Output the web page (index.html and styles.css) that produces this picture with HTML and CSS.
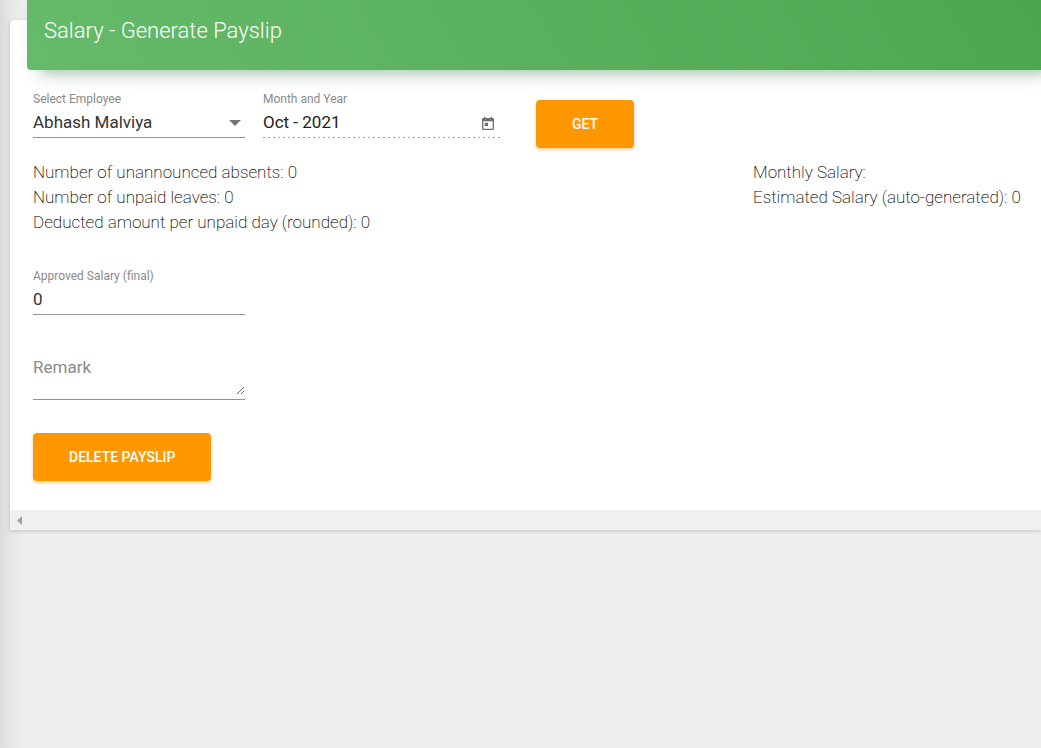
FILE: index.html
```html
<!DOCTYPE html>
<html lang="en">
<head>
    <meta charset="UTF-8">
    <meta name="viewport" content="width=device-width, initial-scale=1.0">
    <title>Salary - Generate Payslip</title>
    <link rel="stylesheet" href="styles.css">
</head>
<body>
    <main class="card">
        <header class="card-header">
            <h1>Salary - Generate Payslip</h1>
        </header>
        <form class="card-body" id="payslipForm">
            <div class="filters">
                <div class="form-group">
                    <label for="employee">Select Employee</label>
                    <div class="select-box">
                        <select id="employee">
                            <option>Abhash Malviya</option>
                        </select>
                        <svg class="arrow" width="12" height="6" viewBox="0 0 12 6"><path d="M0 0h12L6 6z" fill="#757575"/></svg>
                    </div>
                </div>
                <div class="form-group month">
                    <label for="month">Month and Year</label>
                    <div class="month-box">
                        <input type="text" id="month" value="Oct - 2021" readonly>
                        <button type="button" class="calendar" aria-label="Open calendar">
                            <svg width="16" height="16" viewBox="0 0 24 24" fill="#707070"><path d="M19 3h-1V1h-2v2H8V1H6v2H5c-1.110 0-1.990.9-1.990 2L3 19c0 1.100.89 2 2 2h14c1.100 0 2-.9 2-2V5c0-1.100-.9-2-2-2zm0 16H5V8h14v11zM7 10h5v5H7z"/></svg>
                        </button>
                    </div>
                </div>
                <button type="button" class="btn btn-get">Get</button>
            </div>
            <div class="summary">
                <div>
                    <p>Number of unannounced absents: 0</p>
                    <p>Number of unpaid leaves: 0</p>
                    <p>Deducted amount per unpaid day (rounded): 0</p>
                </div>
                <div>
                    <p>Monthly Salary:</p>
                    <p>Estimated Salary (auto-generated): 0</p>
                </div>
            </div>
            <div class="form-group approved">
                <label for="approved">Approved Salary (final)</label>
                <input type="text" id="approved" value="0">
            </div>
            <div class="form-group remark">
                <textarea id="remark" placeholder="Remark" aria-label="Remark"></textarea>
            </div>
            <button type="button" class="btn">Delete Payslip</button>
        </form>
        <div class="scroll-track">
            <svg width="5" height="9" viewBox="0 0 5 9"><path d="M5 0v9L0 4.500z" fill="#a0a0a0"/></svg>
        </div>
    </main>
</body>
</html>
```
FILE: styles.css
```css
* {
    box-sizing: border-box;
}
body {
    margin: 0;
    padding: 20px 0 0 10px;
    min-height: 100vh;
    overflow-x: hidden;
    font-family: Roboto, sans-serif;
    font-size: 17px;
    color: #333;
    background: linear-gradient(to right, #dbdbdb, #e8e8e8 12px, #eee 24px);
}
.card {
    background: #fff;
    border-radius: 4px 0 0 0;
    box-shadow: 0 1px 4px rgba(0, 0, 0, 0.18);
}
.card-header {
    position: relative;
    top: -20px;
    margin: 0 0 -20px 17px;
    padding: 17px;
    height: 70px;
    border-radius: 0 0 0 4px;
    background: linear-gradient(60deg, #66bb6a, #4ca64f);
    box-shadow: 10px 4px 20px rgba(0, 0, 0, 0.14), 10px 7px 12px -5px rgba(76, 175, 80, 0.4);
}
.card-header h1 {
    margin: 0;
    font-size: 22px;
    font-weight: 300;
    line-height: 28px;
    color: #fff;
}
.card-body {
    padding: 20px 0 29px 23px;
}
.filters {
    display: flex;
}
.form-group {
    width: 212px;
}
.form-group label {
    display: block;
    font-size: 12px;
    line-height: 18px;
    color: #8a8a8a;
}
.form-group input,
.form-group select {
    display: block;
    width: 100%;
    height: 30px;
    padding: 0 0 2px;
    border: none;
    border-bottom: 1px solid #949494;
    border-radius: 0;
    outline: none;
    background: transparent;
    font-family: inherit;
    font-size: 17px;
    color: #333;
}
.form-group select {
    appearance: none;
}
.select-box {
    position: relative;
}
.arrow {
    position: absolute;
    top: 12px;
    right: 4px;
    pointer-events: none;
}
.form-group.month {
    width: 238px;
    margin: 0 35px 0 18px;
}
.month-box {
    display: flex;
    align-items: center;
    height: 30px;
    padding-right: 5px;
    background: repeating-linear-gradient(to right, #a0a0a0 0 2px, transparent 2px 5px) left bottom / 100% 1px no-repeat;
}
.month-box input {
    flex: 1;
    min-width: 0;
    border-bottom: none;
    color: #212121;
}
.calendar {
    display: flex;
    padding: 2px 0 0;
    border: none;
    background: none;
    cursor: pointer;
}
.btn {
    height: 48px;
    padding: 0 36px 1px;
    border: none;
    border-radius: 4px;
    background: #ff9800;
    box-shadow: 0 2px 3px rgba(255, 152, 0, 0.4);
    font-family: inherit;
    font-size: 14px;
    font-weight: 500;
    text-transform: uppercase;
    color: #fff;
    cursor: pointer;
}
.btn-get {
    margin-top: 10px;
}
.summary {
    display: grid;
    grid-template-columns: 5fr 2fr;
    margin: 12px 0 32px;
    font-weight: 200;
    line-height: 25px;
    color: #000;
}
.summary p {
    margin: 0;
}
.form-group.remark {
    margin: 40px 0 33px;
    padding-bottom: 4px;
    border-bottom: 1px solid #949494;
}
.form-group textarea {
    display: block;
    width: 100%;
    height: 40px;
    padding: 0;
    border: none;
    outline: none;
    background: transparent;
    font-family: inherit;
    font-size: 17px;
    line-height: 24px;
    color: #333;
    resize: vertical;
}
.form-group textarea::placeholder {
    color: #8a8a8a;
}
.scroll-track {
    display: flex;
    align-items: center;
    height: 20px;
    padding-left: 7px;
    background: #f0f0f0;
}
```
